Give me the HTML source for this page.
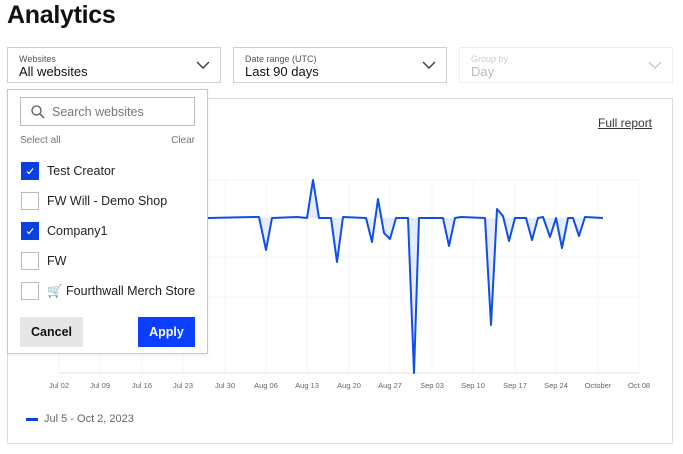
<!DOCTYPE html>
<html><head><meta charset="utf-8"><style>
*{box-sizing:border-box;margin:0;padding:0}
body{width:683px;height:454px;background:#fff;font-family:"Liberation Sans",sans-serif;position:relative;overflow:hidden;color:#111}
.abs{position:absolute}
h1{position:absolute;left:7px;top:1px;font-size:25px;font-weight:700;letter-spacing:-0.3px}
.sel{position:absolute;top:47px;height:36px;width:214px;border:1px solid #cfcfcf;background:#fff}
.sel .l{position:absolute;left:11px;top:6px;font-size:9px;color:#555}
.sel .v{position:absolute;left:11px;top:16px;font-size:13px;color:#111}
.sel svg{position:absolute;right:10px;top:12px}
.card{position:absolute;left:7px;top:98px;width:666px;height:346px;border:1px solid #ddd}
.dd{position:absolute;left:7px;top:89px;width:201px;height:265px;border:1px solid #c8c8c8;background:#fff;box-shadow:0 1px 3px rgba(0,0,0,.08)}
.cb{position:absolute;left:13px;width:18px;height:18px;border:1px solid #bbb;background:#fff}
.cb.on{background:#0a3fe0;border-color:#0a3fe0}
.it{position:absolute;left:39px;font-size:12.5px;color:#222}
.ax{position:absolute;top:381px;font-size:7.5px;color:#666;transform:translateX(-50%)}
</style></head><body>
<h1>Analytics</h1>
<div class="sel" style="left:7px"><div class="l">Websites</div><div class="v">All websites</div><svg width="14" height="10"><path d="M1 2l6 6 6-6" fill="none" stroke="#444" stroke-width="1.5"/></svg></div>
<div class="sel" style="left:233px"><div class="l">Date range (UTC)</div><div class="v">Last 90 days</div><svg width="14" height="10"><path d="M1 2l6 6 6-6" fill="none" stroke="#444" stroke-width="1.5"/></svg></div>
<div class="sel" style="left:459px;border-color:#eee"><div class="l" style="color:#ccc">Group by</div><div class="v" style="color:#bbb">Day</div><svg width="14" height="10"><path d="M1 2l6 6 6-6" fill="none" stroke="#ccc" stroke-width="1.5"/></svg></div>
<div class="card"></div>
<div class="abs" style="left:598px;top:116px;font-size:12px;color:#333;text-decoration:underline">Full report</div>
<svg class="abs" style="left:0;top:0" width="683" height="454">
<g stroke="#f4f4f4" stroke-width="1">
<line x1="59" y1="180" x2="639" y2="180"/><line x1="59" y1="257" x2="639" y2="257"/><line x1="59" y1="297" x2="639" y2="297"/>
<line x1="59" y1="180" x2="59" y2="373"/><line x1="100" y1="180" x2="100" y2="373"/><line x1="142" y1="180" x2="142" y2="373"/><line x1="183" y1="180" x2="183" y2="373"/><line x1="225" y1="180" x2="225" y2="373"/><line x1="266" y1="180" x2="266" y2="373"/><line x1="307" y1="180" x2="307" y2="373"/><line x1="349" y1="180" x2="349" y2="373"/><line x1="390" y1="180" x2="390" y2="373"/><line x1="432" y1="180" x2="432" y2="373"/><line x1="473" y1="180" x2="473" y2="373"/><line x1="515" y1="180" x2="515" y2="373"/><line x1="556" y1="180" x2="556" y2="373"/><line x1="598" y1="180" x2="598" y2="373"/><line x1="639" y1="180" x2="639" y2="373"/>
</g>
<line x1="59" y1="373" x2="639" y2="373" stroke="#e2e2e2"/>
<polygon fill="#e6ecfb" points="208,218 253,217 259,217 266,250 272,218 297,217 307,218 313,180 319,218 331,218 337,262 343,217 366,218 372,242 378,199 384,233 390,239 396,218 408,218 414,373 419,218 443,218 449,246 455,218 461,217 485,218 491,325 497,209 503,216 509,241 515,218 526,218 532,240 538,218 543,217 550,237 556,218 562,248 568,218 573,218 579,236 585,217 603,218"/>
<polyline fill="none" stroke="#0d4fe8" stroke-width="2" stroke-linejoin="round" points="208,218 253,217 259,217 266,250 272,218 297,217 307,218 313,180 319,218 331,218 337,262 343,217 366,218 372,242 378,199 384,233 390,239 396,218 408,218 414,373 419,218 443,218 449,246 455,218 461,217 485,218 491,325 497,209 503,216 509,241 515,218 526,218 532,240 538,218 543,217 550,237 556,218 562,248 568,218 573,218 579,236 585,217 603,218"/>
<rect x="26" y="418" width="12" height="3" fill="#0a3fe0"/>
</svg>
<div class="ax" style="left:59px">Jul 02</div><div class="ax" style="left:100px">Jul 09</div><div class="ax" style="left:142px">Jul 16</div><div class="ax" style="left:183px">Jul 23</div><div class="ax" style="left:225px">Jul 30</div><div class="ax" style="left:266px">Aug 06</div><div class="ax" style="left:307px">Aug 13</div><div class="ax" style="left:349px">Aug 20</div><div class="ax" style="left:390px">Aug 27</div><div class="ax" style="left:432px">Sep 03</div><div class="ax" style="left:473px">Sep 10</div><div class="ax" style="left:515px">Sep 17</div><div class="ax" style="left:556px">Sep 24</div><div class="ax" style="left:598px">October</div><div class="ax" style="left:639px">Oct 08</div>
<div class="abs" style="left:44px;top:413px;font-size:11px;color:#666">Jul 5 - Oct 2, 2023</div>
<div class="dd">
<div class="abs" style="left:12px;top:7px;width:175px;height:29px;border:1px solid #bbb"><svg class="abs" style="left:10px;top:7px" width="14" height="14"><circle cx="5.5" cy="5.5" r="4.5" fill="none" stroke="#555" stroke-width="1.3"/><path d="M9 9l4 4" stroke="#555" stroke-width="1.3"/></svg><div class="abs" style="left:31px;top:7px;font-size:12.5px;color:#777">Search websites</div></div>
<div class="abs" style="left:12px;top:45px;font-size:10px;color:#777">Select all</div>
<div class="abs" style="right:12px;top:45px;font-size:10px;color:#777">Clear</div>
<div class="cb on" style="top:72px"><svg width="16" height="16"><path d="M5 8.5l2 2 4-5" fill="none" stroke="#fff" stroke-width="1.2"/></svg></div><div class="it" style="top:74px">Test Creator</div>
<div class="cb" style="top:102px"></div><div class="it" style="top:104px">FW Will - Demo Shop</div>
<div class="cb on" style="top:132px"><svg width="16" height="16"><path d="M5 8.5l2 2 4-5" fill="none" stroke="#fff" stroke-width="1.2"/></svg></div><div class="it" style="top:134px">Company1</div>
<div class="cb" style="top:162px"></div><div class="it" style="top:164px">FW</div>
<div class="cb" style="top:192px"></div><div class="it" style="top:194px">🛒 Fourthwall Merch Store</div>
<div class="abs" style="left:12px;top:227px;width:63px;height:30px;background:#e6e6e6;font-size:12.5px;font-weight:700;text-align:center;line-height:30px">Cancel</div>
<div class="abs" style="left:130px;top:227px;width:57px;height:30px;background:#0a3fff;color:#fff;font-size:12.5px;font-weight:700;text-align:center;line-height:30px">Apply</div>
</div>
</body></html>
